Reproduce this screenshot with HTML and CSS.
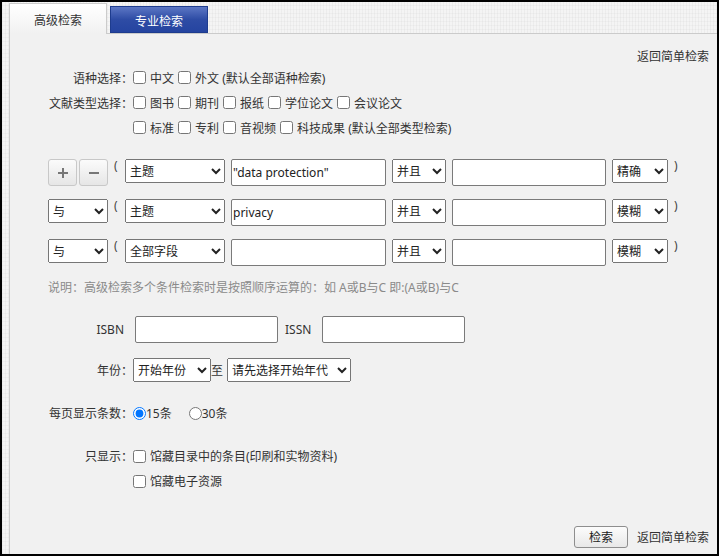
FILE: index.html
```html
<!DOCTYPE html>
<html lang="zh-CN">

<head>
    <meta charset="UTF-8">
    <meta name="viewport" content="width=device-width, initial-scale=1.0">
    <title>高级检索</title>
    <link rel="stylesheet" href="styles.css">
</head>

<body>
    <div class="frame">
        <div class="tabs">
            <a class="tab tab-on" href="#">高级检索</a>
            <a class="tab tab-off" href="#">专业检索</a>
        </div>

        <div class="panel">
            <div class="back-top"><a href="#">返回简单检索</a></div>

            <!-- 语种 / 文献类型 -->
            <div class="opts">
                <div class="line">
                    <span class="lbl">语种选择：</span>
                    <label class="chk"><input type="checkbox">中文</label>
                    <label class="chk"><input type="checkbox">外文 (默认全部语种检索)</label>
                </div>
                <div class="line">
                    <span class="lbl">文献类型选择：</span>
                    <label class="chk"><input type="checkbox">图书</label>
                    <label class="chk"><input type="checkbox">期刊</label>
                    <label class="chk"><input type="checkbox">报纸</label>
                    <label class="chk"><input type="checkbox">学位论文</label>
                    <label class="chk"><input type="checkbox">会议论文</label>
                </div>
                <div class="line indent">
                    <label class="chk"><input type="checkbox">标准</label>
                    <label class="chk"><input type="checkbox">专利</label>
                    <label class="chk"><input type="checkbox">音视频</label>
                    <label class="chk"><input type="checkbox">科技成果 (默认全部类型检索)</label>
                </div>
            </div>

            <!-- 检索条件 -->
            <div class="conds">
                <div class="cond">
                    <span class="pm">
                        <button class="pm-btn" type="button">
                            <svg width="12" height="12" viewBox="0 0 12 12"><path d="M6 1v10M1 6h10" stroke="#777" stroke-width="2" fill="none"/></svg>
                        </button>
                        <button class="pm-btn" type="button">
                            <svg width="12" height="12" viewBox="0 0 12 12"><path d="M1 6h10" stroke="#777" stroke-width="2" fill="none"/></svg>
                        </button>
                    </span>
                    <span class="paren">(</span>
                    <select class="s-field"><option>主题</option></select>
                    <input class="t-word" type="text" value='"data protection"'>
                    <select class="s-op"><option>并且</option></select>
                    <input class="t-word t-word2" type="text">
                    <select class="s-match"><option>精确</option></select>
                    <span class="paren">)</span>
                </div>
                <div class="cond">
                    <select class="s-logic"><option>与</option></select>
                    <span class="paren">(</span>
                    <select class="s-field"><option>主题</option></select>
                    <input class="t-word" type="text" value="privacy">
                    <select class="s-op"><option>并且</option></select>
                    <input class="t-word t-word2" type="text">
                    <select class="s-match"><option>模糊</option></select>
                    <span class="paren">)</span>
                </div>
                <div class="cond">
                    <select class="s-logic"><option>与</option></select>
                    <span class="paren">(</span>
                    <select class="s-field"><option>全部字段</option></select>
                    <input class="t-word" type="text">
                    <select class="s-op"><option>并且</option></select>
                    <input class="t-word t-word2" type="text">
                    <select class="s-match"><option>模糊</option></select>
                    <span class="paren">)</span>
                </div>
            </div>

            <p class="note">说明：高级检索多个条件检索时是按照顺序运算的：如 A或B与C 即:(A或B)与C</p>

            <div class="row ids">
                <span class="lbl-isbn">ISBN</span>
                <input class="t-id" type="text">
                <span class="lbl-issn">ISSN</span>
                <input class="t-id" type="text">
            </div>

            <div class="row year">
                <span class="lbl">年份：</span>
                <select class="s-year"><option>开始年份</option></select>
                <span class="to">至</span>
                <select class="s-year2"><option>请先选择开始年代</option></select>
            </div>

            <div class="row per-page">
                <span class="lbl">每页显示条数：</span>
                <label class="rad"><input type="radio" name="size" checked>15条</label>
                <label class="rad rad2"><input type="radio" name="size">30条</label>
            </div>

            <div class="row only">
                <span class="lbl">只显示：</span>
                <label class="chk"><input type="checkbox">馆藏目录中的条目(印刷和实物资料)</label>
            </div>
            <div class="row only2 indent">
                <label class="chk"><input type="checkbox">馆藏电子资源</label>
            </div>

            <div class="foot">
                <button class="go" type="button">检索</button>
                <a class="back" href="#">返回简单检索</a>
            </div>
        </div>
    </div>
</body>

</html>
```

FILE: styles.css
```css
body {
    margin: 0;
    font-family: "Noto Sans", "Noto Sans CJK SC", sans-serif;
    font-size: 12px;
    color: #333;
}

a {
    color: #333;
    text-decoration: none;
}

.frame {
    width: 719px;
    height: 556px;
    box-sizing: border-box;
    border: 2px solid #000;
    padding-left: 7px;
    display: flex;
    flex-direction: column;
    background-color: #f4f4f4;
    background-image:
        repeating-linear-gradient(90deg, rgba(0, 0, 0, 0.03) 0 1px, transparent 1px 3px),
        repeating-linear-gradient(0deg, rgba(0, 0, 0, 0.025) 0 1px, transparent 1px 4px);
}

/* tabs */
.tabs {
    display: flex;
    align-items: flex-end;
    height: 32px;
    margin-bottom: -1px;
    position: relative;
    z-index: 1;
}

.tab {
    display: flex;
    align-items: center;
    justify-content: center;
    width: 98px;
    box-sizing: border-box;
    padding-top: 2px;
}

.tab-on {
    height: 31px;
    border: 1px solid #cbcbcb;
    border-bottom: 0;
    background: linear-gradient(#ffffff, #f1f1f1);
    color: #333;
}

.tab-off {
    height: 27px;
    margin-left: 3px;
    margin-bottom: 1px;
    border: 1px solid #1e3c8e;
    background: linear-gradient(#5b76c4, #2e4ca5 50%, #2544a0);
    color: #fff;
}

.panel {
    flex: 1;
    border-top: 1px solid #cbcbcb;
    border-left: 1px solid #cbcbcb;
    background: #f1f1f1;
    padding-right: 8px;
}

.back-top {
    margin-top: 15px;
    line-height: 16px;
    text-align: right;
}

/* option lines */
.opts .line {
    display: flex;
    align-items: center;
    height: 25px;
}

.lbl {
    width: 123px;
    flex: none;
    text-align: right;
}

.indent {
    padding-left: 123px;
}

.chk {
    display: inline-flex;
    align-items: center;
    margin-right: 4px;
}

.chk input {
    width: 13px;
    height: 13px;
    margin: 0 4px 0 0;
}

/* conditions */
.conds {
    margin: 19px 0 0 38px;
}

.cond {
    display: flex;
    align-items: flex-start;
    gap: 6px;
    margin-bottom: 13px;
}

.pm {
    display: flex;
    gap: 2px;
}

.pm-btn {
    width: 29px;
    height: 27px;
    padding: 0;
    border: 1px solid #c8c8c8;
    border-radius: 3px;
    background: linear-gradient(#fbfbfb, #e6e6e6);
    display: flex;
    align-items: center;
    justify-content: center;
}

.paren {
    width: 5px;
    line-height: 14px;
    color: #444;
}

select,
input[type="text"] {
    font-family: inherit;
    font-size: 12px;
    color: #222;
    box-sizing: border-box;
    margin: 0;
}

select {
    height: 24px;
}

input[type="text"] {
    height: 27px;
    border: 1px solid #7a7a7a;
    border-radius: 2px;
    padding: 1px 1px;
    background: #fff;
}

.s-logic {
    width: 60px;
}

.s-field {
    width: 100px;
}

.t-word {
    width: 155px;
}

.t-word2 {
    width: 154px;
}

.s-op {
    width: 54px;
}

.s-match {
    width: 56px;
}

.note {
    margin: 1px 0 0 38px;
    line-height: 17px;
    color: #8a8a8a;
}

/* rows below */
.row {
    display: flex;
    align-items: center;
}

.ids {
    margin-top: 20px;
}

.lbl-isbn {
    width: 114px;
    text-align: right;
}

.ids .t-id {
    width: 143px;
    margin-left: 11px;
}

.ids .t-id + .lbl-issn {
    margin-left: 7px;
}

.lbl-issn {
    width: 30px;
}

.lbl-issn + .t-id {
    margin-left: 7px;
}

.year {
    margin-top: 15px;
}

.s-year {
    width: 78px;
}

.to {
    margin-right: 4px;
}

.s-year2 {
    width: 124px;
}

.per-page {
    margin-top: 21px;
    height: 20px;
}

.rad {
    display: inline-flex;
    align-items: center;
}

.rad input {
    width: 13px;
    height: 13px;
    margin: 0;
}

.rad2 {
    margin-left: 17px;
}

.only {
    margin-top: 23px;
    height: 20px;
}

.only2 {
    margin-top: 5px;
    height: 20px;
}

.foot {
    display: flex;
    justify-content: flex-end;
    align-items: center;
    margin-top: 35px;
}

.go {
    width: 54px;
    height: 22px;
    padding: 0;
    font-family: inherit;
    font-size: 12px;
    color: #222;
    border: 1px solid #8e8e8e;
    border-radius: 3px;
    background: linear-gradient(#fcfcfc, #e8e8e8);
}

.back {
    margin-left: 9px;
}
```
